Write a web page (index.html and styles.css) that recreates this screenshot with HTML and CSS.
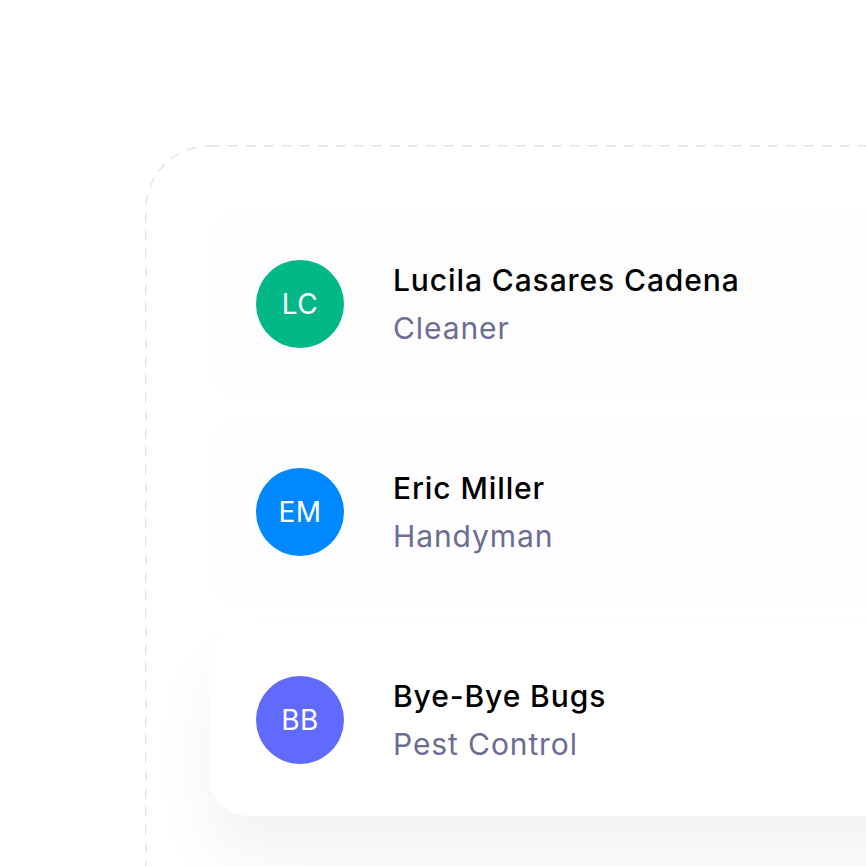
FILE: index.html
```html
<!DOCTYPE html>
<html lang="en">
<head>
    <meta charset="UTF-8">
    <meta name="viewport" content="width=device-width, initial-scale=1.0">
    <title>Contacts</title>
    <link rel="stylesheet" href="styles.css">
</head>
<body>
    <div class="stage">
        <div class="frame">
            <svg class="frame-outline" xmlns="http://www.w3.org/2000/svg" width="1000" height="1000">
                <rect x="0.75" y="0.75" width="1100" height="1100" rx="64" ry="64" fill="none" stroke="#e4e4e6" stroke-width="1.5" stroke-dasharray="10 8"/>
            </svg>
            <div class="contact-list">
                <div class="contact-card faded">
                    <div class="avatar green">LC</div>
                    <div class="contact-info">
                        <div class="contact-name">Lucila Casares Cadena</div>
                        <div class="contact-role">Cleaner</div>
                    </div>
                </div>
                <div class="contact-card faded tint">
                    <div class="avatar blue">EM</div>
                    <div class="contact-info">
                        <div class="contact-name">Eric Miller</div>
                        <div class="contact-role">Handyman</div>
                    </div>
                </div>
                <div class="contact-card front">
                    <div class="avatar indigo">BB</div>
                    <div class="contact-info">
                        <div class="contact-name">Bye-Bye Bugs</div>
                        <div class="contact-role">Pest Control</div>
                    </div>
                </div>
            </div>
        </div>
    </div>
</body>
</html>
```

FILE: styles.css
```css
body {
    margin: 0;
    background: #ffffff;
    font-family: Inter, "Noto Sans", sans-serif;
    overflow: hidden;
}
.stage {
    padding: 145px 0 0 145px;
}
.frame {
    position: relative;
    width: 1000px;
    height: 1000px;
    padding: 63px 0 0 64px;
    box-sizing: border-box;
}
.frame-outline {
    position: absolute;
    top: 0;
    left: 0;
}
.contact-list {
    position: relative;
    display: flex;
    flex-direction: column;
    gap: 16px;
    width: 900px;
}
.contact-card {
    display: flex;
    align-items: center;
    gap: 49px;
    height: 192px;
    padding-left: 47px;
    border-radius: 40px;
    background: #fdfdfd;
    box-shadow: 0 0 2px rgba(0, 0, 0, 0.015);
}
.contact-card.tint {
    background: #fefdff;
}
.contact-card.front {
    background: #ffffff;
    box-shadow: 0 40px 64px rgba(20, 20, 30, 0.05);
}
.avatar {
    width: 88px;
    height: 88px;
    border-radius: 50%;
    flex-shrink: 0;
    display: flex;
    align-items: center;
    justify-content: center;
    color: #ffffff;
    font-size: 28px;
    letter-spacing: 0.5px;
}
.green {
    background: #02b887;
}
.blue {
    background: #0088fe;
}
.indigo {
    background: #606bfe;
}
.contact-name {
    font-size: 30px;
    line-height: 48px;
    font-weight: 500;
    letter-spacing: 0.9px;
    color: #000000;
}
.contact-role {
    font-size: 30px;
    line-height: 48px;
    letter-spacing: 0.9px;
    color: #6b6d92;
}
```
